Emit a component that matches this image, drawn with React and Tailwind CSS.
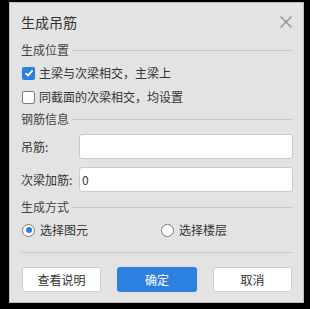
import React from "react";

const font = { fontFamily: '"Noto Sans CJK SC", "Noto Sans", sans-serif' };

function Section({ title }) {
  return (
    <div className="flex items-center h-[18px] gap-[3px]">
      <span className="text-[12px] leading-none text-[#444]">{title}</span>
      <div className="flex-1 h-px bg-[#c8c8c8]" />
    </div>
  );
}

function Checkbox({ checked, label }) {
  return (
    <div className="flex items-center h-[24px]">
      {checked ? (
        <div className="w-[13px] h-[13px] ml-px rounded-[2px] bg-[#2b7fde] flex items-center justify-center">
          <svg width="10" height="10" viewBox="0 0 10 10">
            <path d="M1.5 5.2 L4 7.6 L8.6 2.4" fill="none" stroke="white" strokeWidth="1.7" />
          </svg>
        </div>
      ) : (
        <div className="w-[13px] h-[13px] ml-px rounded-[2px] bg-white border border-[#7a7a7a]" />
      )}
      <span className="ml-[4px] text-[12px] leading-none text-[#333]">{label}</span>
    </div>
  );
}

function Radio({ checked, label }) {
  return (
    <div className="flex items-center h-[24px]">
      <div className="w-[13px] h-[13px] ml-px rounded-full bg-white border border-[#7a7a7a] flex items-center justify-center">
        {checked && <div className="w-[6px] h-[6px] rounded-full bg-[#2b7fde]" />}
      </div>
      <span className="ml-[5px] text-[12px] leading-none text-[#333]">{label}</span>
    </div>
  );
}

export default function App() {
  return (
    <div className="w-[310px] h-[309px] bg-black pl-[9px] pt-[2px]" style={font}>
      <div className="w-[295px] h-[301px] bg-[#e3e3e3] border border-[#bdbdbd] flex flex-col pl-[11px] pr-[10px]">
        <div className="h-[38px] flex items-center justify-between">
          <span className="text-[14px] leading-none text-[#333]">生成吊筋</span>
          <svg width="12" height="12" viewBox="0 0 12 12" className="mr-[1px]">
            <path d="M0.5 0.5 L11.5 11.5 M11.5 0.5 L0.5 11.5" stroke="#8a8a8a" strokeWidth="1.2" />
          </svg>
        </div>
        <Section title="生成位置" />
        <div className="mt-[2px]">
          <Checkbox checked label="主梁与次梁相交，主梁上" />
          <Checkbox label="同截面的次梁相交，均设置" />
        </div>
        <div className="mt-px">
          <Section title="钢筋信息" />
        </div>
        <div className="mt-[6px] flex items-center h-[25px]">
          <span className="w-[58px] text-[12px] leading-none text-[#333]">吊筋:</span>
          <div className="flex-1 h-full bg-white border border-[#cacaca] rounded-[3px]" />
        </div>
        <div className="mt-[8px] flex items-center h-[25px]">
          <span className="w-[58px] text-[12px] leading-none text-[#333]">次梁加筋:</span>
          <div className="flex-1 h-full bg-white border border-[#cacaca] rounded-[3px] flex items-center pl-[2px]">
            <span className="text-[12px] leading-none text-[#333]">0</span>
          </div>
        </div>
        <div className="mt-[6px]">
          <Section title="生成方式" />
        </div>
        <div className="mt-[2px] flex">
          <div className="w-[139px]">
            <Radio checked label="选择图元" />
          </div>
          <Radio label="选择楼层" />
        </div>
        <div className="mt-[10px] h-px bg-[#c8c8c8] mr-[1px]" />
        <div className="mt-[14px] flex justify-between pr-[1px]">
          <button className="w-[79px] h-[25px] bg-white border border-[#cfcfcf] rounded-[3px] text-[12px] leading-none text-[#333] ml-px">查看说明</button>
          <button className="w-[80px] h-[25px] bg-[#2d80e0] rounded-[3px] text-[12px] leading-none text-white">确定</button>
          <button className="w-[79px] h-[25px] bg-white border border-[#cfcfcf] rounded-[3px] text-[12px] leading-none text-[#333]">取消</button>
        </div>
      </div>
    </div>
  );
}
